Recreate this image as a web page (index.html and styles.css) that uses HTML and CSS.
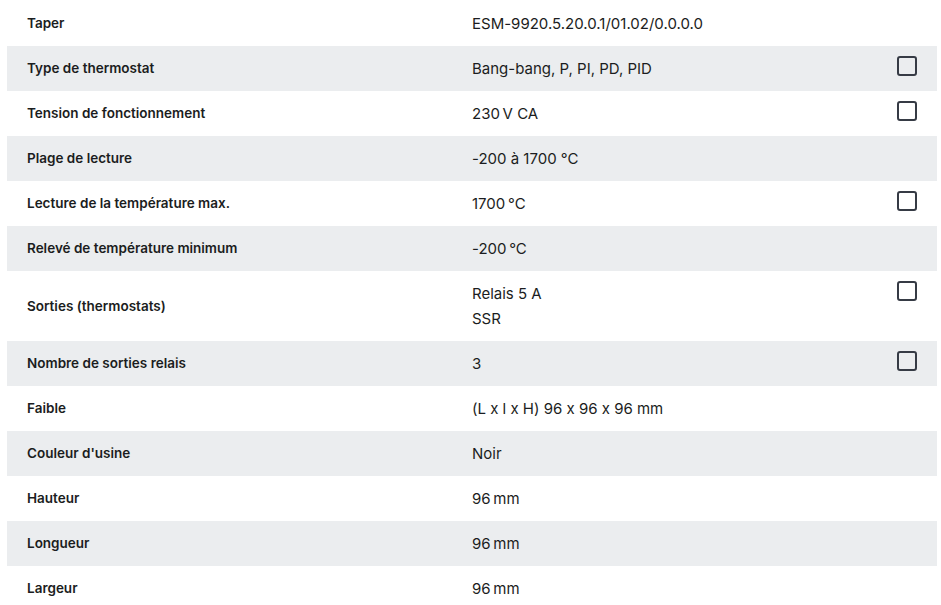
FILE: index.html
```html
<!DOCTYPE html>
<html lang="fr">
<head>
<meta charset="utf-8">
<title>Caractéristiques</title>
<link rel="stylesheet" href="styles.css">
</head>
<body>
<div class="specs">
  <div class="row"><div class="label">Taper</div><div class="value"><div class="text">ESM-9920.5.20.0.1/01.02/0.0.0.0</div></div></div>
  <div class="row alt"><div class="label">Type de thermostat</div><div class="value"><div class="text">Bang-bang, P, PI, PD, PID</div><span class="check"></span></div></div>
  <div class="row"><div class="label">Tension de fonctionnement</div><div class="value"><div class="text">230&#8239;V CA</div><span class="check"></span></div></div>
  <div class="row alt"><div class="label">Plage de lecture</div><div class="value"><div class="text">-200 à 1700 °C</div></div></div>
  <div class="row"><div class="label">Lecture de la température max.</div><div class="value"><div class="text">1700&#8239;°C</div><span class="check"></span></div></div>
  <div class="row alt"><div class="label">Relevé de température minimum</div><div class="value"><div class="text">-200&#8239;°C</div></div></div>
  <div class="row"><div class="label">Sorties (thermostats)</div><div class="value"><div class="text">Relais 5 A<br>SSR</div><span class="check"></span></div></div>
  <div class="row alt"><div class="label">Nombre de sorties relais</div><div class="value"><div class="text">3</div><span class="check"></span></div></div>
  <div class="row"><div class="label">Faible</div><div class="value"><div class="text">(L x l x H) 96 x 96 x 96 mm</div></div></div>
  <div class="row alt"><div class="label">Couleur d'usine</div><div class="value"><div class="text">Noir</div></div></div>
  <div class="row"><div class="label">Hauteur</div><div class="value"><div class="text">96&#8239;mm</div></div></div>
  <div class="row alt"><div class="label">Longueur</div><div class="value"><div class="text">96&#8239;mm</div></div></div>
  <div class="row"><div class="label">Largeur</div><div class="value"><div class="text">96&#8239;mm</div></div></div>
</div>
</body>
</html>
```
FILE: styles.css
```css
html, body {
  margin: 0;
  padding: 0;
  background: #ffffff;
}
body {
  font-family: Inter, "Noto Sans", "Liberation Sans", sans-serif;
  color: #1b1d21;
  font-feature-settings: "calt" 0;
}
.specs {
  width: 930px;
  margin-left: 7px;
  padding-top: 1px;
}
.row {
  display: grid;
  grid-template-columns: 1fr 1fr;
  padding: 10px 20px;
  align-items: center;
}
.row.alt {
  background: #ebedef;
}
.label {
  font-size: 13.5px;
  font-weight: 600;
  line-height: 25px;
}
.value {
  display: flex;
  justify-content: space-between;
  align-items: flex-start;
}
.text {
  font-size: 15px;
  line-height: 25px;
}
.check {
  width: 20px;
  height: 20px;
  box-sizing: border-box;
  border: 2px solid #363b45;
  border-radius: 3px;
  flex: none;
}
```
